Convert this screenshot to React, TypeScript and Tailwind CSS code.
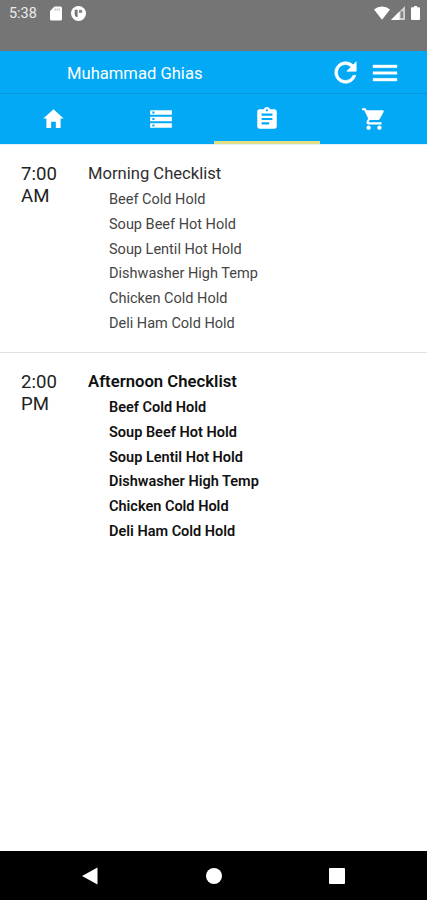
import type { ReactNode } from 'react'
import { MdStorage } from 'react-icons/md'
import { IoMdHome, IoMdMenu, IoMdRefresh } from 'react-icons/io'

interface Checklist {
  time: string
  title: string
  items: string[]
  due?: boolean
}

const items = [
  'Beef Cold Hold',
  'Soup Beef Hot Hold',
  'Soup Lentil Hot Hold',
  'Dishwasher High Temp',
  'Chicken Cold Hold',
  'Deli Ham Cold Hold',
]

const checklists: Checklist[] = [
  { time: '7:00 AM', title: 'Morning Checklist', items },
  { time: '2:00 PM', title: 'Afternoon Checklist', items, due: true },
]

function ClipboardIcon() {
  return (
    <svg className="size-[26px]" viewBox="0 0 24 24" fill="currentColor">
      <path d="M19 3h-4.18C14.4 1.84 13.3 1 12 1c-1.3 0-2.4.84-2.82 2H5c-1.1 0-2 .9-2 2v14c0 1.1.9 2 2 2h14c1.1 0 2-.9 2-2V5c0-1.1-.9-2-2-2zm-7 0c.55 0 1 .45 1 1s-.45 1-1 1-1-.45-1-1 .45-1 1-1zm2 14H7v-2h7v2zm3-4H7v-2h10v2zm0-4H7V7h10v2z" />
    </svg>
  )
}

function CartIcon() {
  return (
    <svg className="size-[26px]" viewBox="0 0 24 24" fill="currentColor">
      <path d="M7 18c-1.1 0-2 .9-2 2s.9 2 2 2 2-.9 2-2-.9-2-2-2zM17 18c-1.1 0-2 .9-2 2s.9 2 2 2 2-.9 2-2-.9-2-2-2z" />
      <path d="M1 2v2h2l3.6 7.59-1.35 2.45C4.52 15.37 5.48 17 7 17h12v-2H7.42c-.14 0-.25-.11-.25-.25l.03-.12.9-1.63h7.45c.75 0 1.41-.41 1.75-1.03l3.58-6.49c.37-.66-.11-1.48-.87-1.48H5.21l-.94-2H1z" />
      <path d="M6 5h13l-3.5 6.5H9z" />
    </svg>
  )
}

function StatusBar() {
  return (
    <div className="flex h-[51px] shrink-0 items-start bg-[#757575] pl-[9px] pr-[7px] text-white">
      <span className="mt-[4px] w-[28px] text-[14.4px] leading-[20px] text-[#ececec]">5:38</span>
      <svg className="ml-[13px] mt-[6px]" width="12" height="15" viewBox="0 0 12 15" fill="currentColor">
        <path d="M4.5 0.5H10.5Q12 0.5 12 2V13Q12 14.5 10.5 14.5H1.5Q0 14.5 0 13V5Z" />
        <path d="M5.2 2.5v2M7.2 2.5v2M9.2 2.5v2" stroke="#a5a5a5" strokeWidth="0.9" />
      </svg>
      <svg className="ml-[9px] mt-[6px]" width="15" height="15" viewBox="0 0 15 15">
        <circle cx="7.5" cy="7.5" r="7.5" fill="currentColor" />
        <path d="M3.7 3.8H6.6V11H5.5Q3.7 10.3 3.7 8.5Z" fill="#757575" />
        <path d="M8 3.8H10Q11.3 4 11.3 5.4T10 7H8Z" fill="#8a8a8a" />
      </svg>
      <svg className="ml-auto mt-[6px]" width="16" height="14" viewBox="0 0 16 14" fill="currentColor">
        <path d="M8 13.7L0 3.6Q3.5 0.4 8 0.4T16 3.6Z" />
      </svg>
      <svg className="ml-[1px] mt-[6px]" width="14" height="14" viewBox="0 0 14 14">
        <path d="M14 0V14H0Z" fill="#d0d0d0" />
        <path d="M8.5 5.5V14H0Z" fill="#fff" />
        <path d="M9.5 5.5h2.7v6.5h-2.7z" fill="#858585" />
      </svg>
      <svg className="ml-[6px] mt-[6px]" width="9" height="14" viewBox="0 0 9 14" fill="currentColor">
        <path d="M3 0H6V1.3H8Q9 1.3 9 2.3V13Q9 14 8 14H1Q0 14 0 13V2.3Q0 1.3 1 1.3H3Z" />
      </svg>
    </div>
  )
}

function Header() {
  return (
    <header className="flex h-[43px] shrink-0 items-center border-b border-[#0597d9] bg-[#03a9f4] pl-[67px] pr-[26px] pt-px text-white">
      <h1 className="pt-px text-[16.6px] leading-[21px]">Muhammad Ghias</h1>
      <IoMdRefresh className="ml-auto size-[31px] stroke-current stroke-[12px]" />
      <IoMdMenu className="ml-[8px] size-[32px] stroke-current stroke-[6px]" />
    </header>
  )
}

function Tab({ active, children }: { active?: boolean; children: ReactNode }) {
  return (
    <button
      className={`flex flex-1 items-center justify-center border-b-[3px] pl-px pt-[3px] ${
        active ? 'border-[#e0df84]' : 'border-transparent'
      }`}
    >
      {children}
    </button>
  )
}

function ChecklistRow({ time, title, items, due }: Checklist) {
  return (
    <section className="flex h-[208px] pl-[21px] pt-[18px]">
      <div className="w-[67px] pr-[20px] text-[18.6px] leading-[22px] text-[#222]">{time}</div>
      <div className={due ? 'font-semibold text-[#111]' : 'text-[#444]'}>
        <h2 className={`leading-[22px] ${due ? 'text-[16.7px]' : 'text-[16.6px] text-[#2e2e2e]'}`}>{title}</h2>
        <ul className="pl-[21px] pt-[3px]">
          {items.map((item) => (
            <li key={item} className="h-[24.75px] text-[14.5px] leading-[24.75px]">
              {item}
            </li>
          ))}
        </ul>
      </div>
    </section>
  )
}

export default function App() {
  return (
    <div className="flex h-[900px] w-[427px] flex-col overflow-hidden bg-white font-['Roboto',sans-serif]">
      <StatusBar />
      <Header />
      <nav className="flex h-[50px] shrink-0 bg-[#03a9f4] text-white">
        <Tab>
          <IoMdHome className="mb-px size-[25px]" />
        </Tab>
        <Tab>
          <MdStorage className="size-[26px]" />
        </Tab>
        <Tab active>
          <ClipboardIcon />
        </Tab>
        <Tab>
          <CartIcon />
        </Tab>
      </nav>
      <main className="flex-1 divide-y divide-[#e2e2e2] border-t border-[#e0f3fc]">
        {checklists.map((checklist) => (
          <ChecklistRow key={checklist.title} {...checklist} />
        ))}
      </main>
      <footer className="flex h-[49px] shrink-0 items-center bg-black pl-[82px] pr-[82px] text-white">
        <svg width="16" height="18" viewBox="0 0 16 18" fill="currentColor">
          <path d="M15.5 0.5V17.5L0 9Z" />
        </svg>
        <div className="ml-[108px] size-4 rounded-full bg-white" />
        <div className="ml-[107px] size-4 rounded-[1px] bg-white" />
      </footer>
    </div>
  )
}
